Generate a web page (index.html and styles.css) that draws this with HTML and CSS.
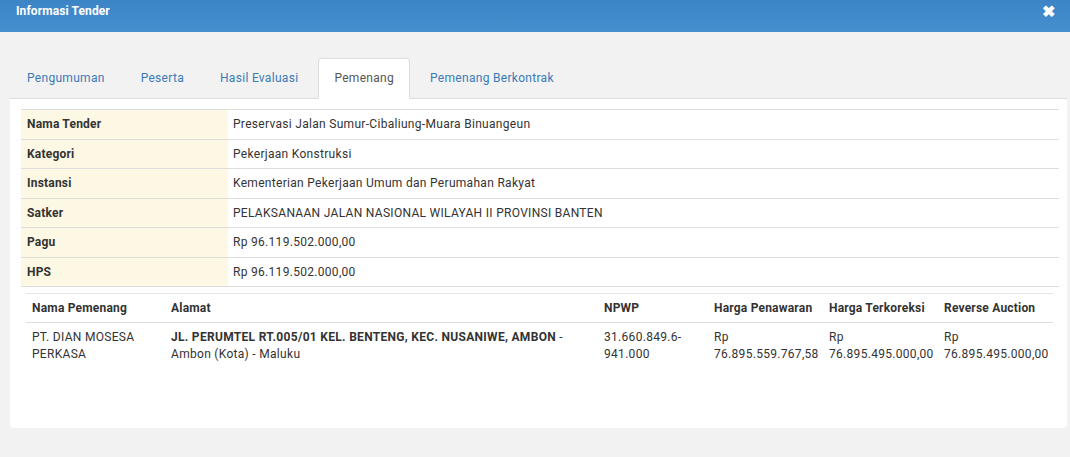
FILE: index.html
```html
<!DOCTYPE html>
<html>
<head>
  <link rel="stylesheet" href="styles.css">
</head>
<body>
  <div class="modal">
    <div class="modal-header">
      <span class="modal-title">Informasi Tender</span>
      <span class="close">&#10006;</span>
    </div>

    <div class="modal-body">
      <ul class="nav-tabs">
        <li><a href="#">Pengumuman</a></li>
        <li><a href="#">Peserta</a></li>
        <li><a href="#">Hasil Evaluasi</a></li>
        <li class="active"><a href="#">Pemenang</a></li>
        <li><a href="#">Pemenang Berkontrak</a></li>
      </ul>

      <div class="tab-content">
        <table class="info">
          <tr><th>Nama Tender</th><td>Preservasi Jalan Sumur-Cibaliung-Muara Binuangeun</td></tr>
          <tr><th>Kategori</th><td>Pekerjaan Konstruksi</td></tr>
          <tr><th>Instansi</th><td>Kementerian Pekerjaan Umum dan Perumahan Rakyat</td></tr>
          <tr><th>Satker</th><td>PELAKSANAAN JALAN NASIONAL WILAYAH II PROVINSI BANTEN</td></tr>
          <tr><th>Pagu</th><td>Rp 96.119.502.000,00</td></tr>
          <tr><th>HPS</th><td>Rp 96.119.502.000,00</td></tr>
        </table>

        <div class="winner-wrap">
          <table class="winner">
            <thead>
              <tr>
                <th class="c-nama">Nama Pemenang</th>
                <th class="c-alamat">Alamat</th>
                <th class="c-npwp">NPWP</th>
                <th class="c-harga">Harga Penawaran</th>
                <th class="c-harga">Harga Terkoreksi</th>
                <th class="c-harga">Reverse Auction</th>
              </tr>
            </thead>
            <tbody>
              <tr>
                <td>PT. DIAN MOSESA PERKASA</td>
                <td><b>JL. PERUMTEL RT.005/01 KEL. BENTENG, KEC. NUSANIWE, AMBON</b> - Ambon (Kota) - Maluku</td>
                <td>31.660.849.6-941.000</td>
                <td>Rp 76.895.559.767,58</td>
                <td>Rp 76.895.495.000,00</td>
                <td>Rp 76.895.495.000,00</td>
              </tr>
            </tbody>
          </table>
        </div>
      </div>
    </div>
  </div>
</body>
</html>
```

FILE: styles.css
```css
* {
  box-sizing: border-box;
}

body {
  margin: 0;
  background: #f2f2f2;
  font-family: Roboto, "Liberation Sans", sans-serif;
  font-size: 12px;
  letter-spacing: 0.3px;
  color: #333;
}

.modal-header {
  height: 32px;
  padding: 0 16px;
  display: flex;
  align-items: center;
  justify-content: space-between;
  background: linear-gradient(#3c84c5, #468fcf);
  color: #fff;
}

.modal-title {
  font-weight: bold;
  letter-spacing: 0.1px;
  margin-top: -11px;
}

.close {
  font-size: 16px;
  font-weight: bold;
  margin-right: -1px;
  margin-top: -10px;
}

.modal-body {
  padding: 26px 3px 30px 10px;
}

.nav-tabs {
  list-style: none;
  margin: 0;
  padding: 0 0 0 1px;
  display: flex;
  border-bottom: 1px solid #ddd;
}

.nav-tabs li {
  margin-right: 4px;
  margin-bottom: -1px;
}

.nav-tabs a {
  display: block;
  padding: 10px 15px;
  line-height: 19px;
  border: 1px solid transparent;
  border-radius: 4px 4px 0 0;
  color: #3a7ab8;
  text-decoration: none;
}

.nav-tabs .active a {
  background: #fff;
  color: #555;
  border-color: #ddd #ddd transparent;
}

.tab-content {
  background: #fff;
  height: 329px;
  padding: 10px 8px 0 11px;
  border-radius: 0 0 4px 4px;
}

table {
  width: 100%;
  border-collapse: collapse;
}

.info th,
.info td {
  border-top: 1px solid #ddd;
  padding: 6px 5px;
  line-height: 16.5px;
  text-align: left;
}

.info tr:last-child th,
.info tr:last-child td {
  border-bottom: 1px solid #ddd;
}

.info th {
  width: 207px;
  background: #fcf8e3;
  font-weight: bold;
  letter-spacing: 0.2px;
  padding-left: 6px;
}

.winner-wrap {
  padding: 6px 6px 0 5px;
}

.winner {
  table-layout: fixed;
  border-top: 1px solid #e6e6e6;
}

.winner th,
.winner td {
  padding: 6px 6px;
  line-height: 17px;
  text-align: left;
  vertical-align: top;
}

.winner th {
  font-weight: bold;
  letter-spacing: 0.2px;
  padding: 6px 6px 5px;
  border-bottom: 1px solid #ddd;
}

.c-nama { width: 139px; }
.c-alamat { width: 433px; }
.c-npwp { width: 110px; }
.c-harga { width: 115px; }
```
